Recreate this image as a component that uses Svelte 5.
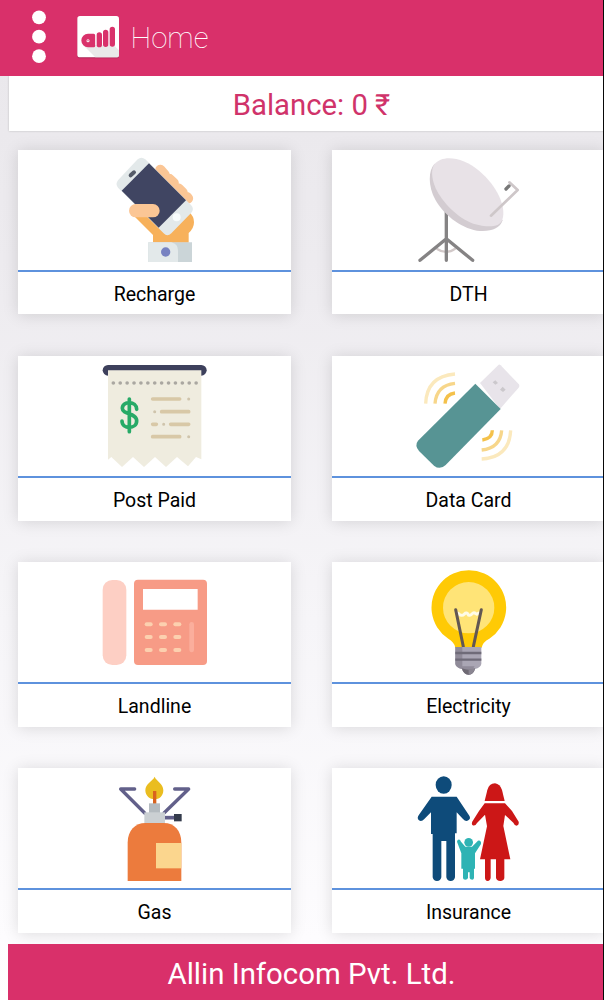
<script>
  const cards = [
    { id: 'recharge', label: 'Recharge', box: '-216 15 819 360' },
    { id: 'dth', label: 'DTH', box: '-204 15 819 360' },
    { id: 'postpaid', label: 'Post Paid', box: '-216 3 819 360' },
    { id: 'datacard', label: 'Data Card', box: '-204 3 819 360' },
    { id: 'landline', label: 'Landline', box: '-216 6 819 360' },
    { id: 'electricity', label: 'Electricity', box: '-234 6 819 360' },
    { id: 'gas', label: 'Gas', box: '-216 9 819 360' },
    { id: 'insurance', label: 'Insurance', box: '-219 9 819 360' }
  ];
  const holes = Array.from({ length: 13 }, (_, i) => 70 + i * 20.7);
  const keys = [193, 231, 270].flatMap((y) => [176, 219, 262].map((x) => ({ x, y })));
</script>

<div class="screen">
  <header>
    <svg class="menu" width="14" height="54" viewBox="0 0 14 54" fill="#fff">
      <circle cx="7" cy="7.3" r="6.9" /><circle cx="7" cy="26.7" r="6.9" /><circle cx="7" cy="46.2" r="6.9" />
    </svg>
    <svg class="logo" width="44" height="44" viewBox="0 0 132 132">
      <rect x="4" y="6" width="125" height="124" rx="8" fill="#ab2555" />
      <rect x="4" y="3" width="125" height="124" rx="8" fill="#fff" />
      <path d="M22 91L58 127H121Q129 127 129 119V106L112 89Z" fill="#e9e9e9" />
      <path d="M53 61V92H36A15.5 15.5 0 0 1 36 61Z" fill="#d9326b" stroke="#d9326b" stroke-width="9" stroke-linejoin="round" />
      <circle cx="36" cy="77" r="4.5" fill="#fff" /><circle cx="36" cy="77" r="2" fill="#d9326b" />
      <path d="M70 60V89M89 52V88M109 43V87" stroke="#d9326b" stroke-width="16" stroke-linecap="round" />
    </svg>
    <h1>Home</h1>
  </header>

  <div class="balance">Balance: 0 ₹</div>

  <main>
    {#each cards as card (card.id)}
      <section class="card">
        <svg class="picture" width="273" height="120" viewBox={card.box}>
          {#if card.id === 'recharge'}
            <path d="M129 210L189 270V293H296V264Q312 250 312 232Q312 214 298 202L238 160L150 170Z" fill="#f7b15b" />
            <path d="M211 75L224 90M238 102L251 114M265 130L278 143M290 156L294 160" stroke="#fbc695" stroke-width="31" stroke-linecap="round" />
            <path d="M143 43Q154 34 166 43L303 180Q314 192 304 203L244 265Q232 277 221 265L84 128Q75 118 84 106Z" fill="#e3e9ea" />
            <path d="M177 55L288 166L206 248L95 137Z" fill="#404562" />
            <path d="M122 91L132 82" stroke="#555b68" stroke-width="12" stroke-linecap="round" />
            <circle cx="260" cy="217" r="12" fill="#f8fcfc" />
            <rect x="117" y="177" width="92" height="40" rx="20" fill="#fbc695" />
            <path d="M175 292H306V351H175Z" fill="#cbd5d8" />
            <path d="M175 292H244Q264 297 264 316V351H175Z" fill="#e3e9ea" />
            <circle cx="227" cy="321" r="14" fill="#7782c1" />
          {:else if card.id === 'dth'}
            <path d="M110 311Q139 331 167 310" fill="none" stroke="#d2c9c9" stroke-width="7" />
            <path d="M139 200V346M60 346L139 281L218 346" fill="none" stroke="#858384" stroke-width="10" stroke-linecap="round" stroke-linejoin="round" />
            <path d="M104 56C84 76 84 124 106 164C136 216 190 253 240 258C276 260 300 249 308 226Z" fill="#d3ccd1" />
            <path d="M103 58C127 28 188 35 239 79C291 124 320 186 307 224C297 250 260 247 220 236C172 220 126 170 107 130C94 99 93 74 103 58Z" fill="#e8e2e7" />
            <path d="M273 212L353 135L328 112" fill="none" stroke="#cec7c9" stroke-width="8" stroke-linecap="round" stroke-linejoin="round" />
            <path d="M318 132L327 123" stroke="#777" stroke-width="10" stroke-linecap="round" />
          {:else if card.id === 'postpaid'}
            <rect x="38" y="30" width="312" height="32" rx="16" fill="#3d405c" />
            <path d="M54 46H334V313L318 306L294 334L261 306L228 336L195 306L162 336L129 306L96 336L64 306L54 314Z" fill="#efecdf" />
            {#each holes as x (x)}<circle cx={x} cy="84" r="5.5" fill="#aaa7a1" />{/each}
            <path d="M118 132V230M140 163C140 137 97 136 97 160C97 180 140 173 140 197C140 224 96 223 96 198" fill="none" stroke="#27aa67" stroke-width="11" stroke-linecap="round" />
            <g stroke="#d8c8a7" stroke-width="11" stroke-linecap="round">
              <path d="M188 132H269M215 170H296M188 208H199M242 208H296M188 245H269" />
              <path d="M296 132h.1M194 170h.1M221 208h.1M296 245h.1" stroke="#cfc4ac" stroke-width="9" />
            </g>
          {:else if card.id === 'datacard'}
            <path d="M240 84L296 29Q299 28 302 31L356 87Q360 92 356 98L300 162Z" fill="#e8e4ea" />
            <path d="M278 82L286 76L294 84L286 89ZM300 104L308 95L317 104L309 111Z" fill="#cbc8cc" />
            <path d="M226 86L302 162L137 330Q120 346 102 332L57 288Q43 271 54 257Z" fill="#579494" />
            <g fill="none" stroke-width="10">
              <path d="M135 146Q137 117 165 114M247 255Q277 251 277 226" stroke="#f4c14b" />
              <path d="M105 146Q109 91 165 85M245 285Q301 279 305 226" stroke="#f7d68a" />
              <path d="M77 146Q80 64 165 57M245 312Q328 307 332 226" stroke="#fbe9bd" />
            </g>
          {:else if card.id === 'landline'}
            <rect x="38" y="60" width="71" height="255" rx="29" fill="#fdcfc4" />
            <rect x="132" y="59" width="219" height="256" rx="12" fill="#f79b86" />
            <path d="M159 87H323V149H159Z" fill="#fff" />
            {#each keys as key (`${key.x}-${key.y}`)}
              <rect x={key.x - 12} y={key.y - 6} width="24" height="12" rx="6" fill="#fcd0af" />
            {/each}
            <rect x="298" y="186" width="14" height="91" rx="7" fill="#fbae9c" />
          {:else if card.id === 'electricity'}
            <path d="M135 263V260Q132 246 115 236A112 112 0 1 1 238 236Q218 246 215 263Z" fill="#ffca05" />
            <circle cx="176" cy="143" r="77" fill="#ffe477" />
            <path d="M139 158C151 160 146 166 155 166S163 157 170 159S172 167 179 166S187 156 194 159S200 166 206 159" fill="none" stroke="#fffce8" stroke-width="9" stroke-linecap="round" />
            <path d="M137 149L160 260M214 149L190 260" stroke="#625753" stroke-width="9" stroke-linecap="round" />
            <path d="M136 261H214V312Q212 323 195 327Q191 343 176 344Q161 343 156 327Q138 323 136 312Z" fill="#aaa6b4" />
            <path d="M136 261H157V319H194L176 344Q161 343 156 327Q138 323 136 312Z" fill="#908b99" />
            <path d="M156 325Q176 333 195 325Q192 344 176 344Q160 344 156 325Z" fill="#6e6973" />
            <path d="M176 328Q187 328 195 325Q190 344 176 344Z" fill="#8a8591" />
            <path d="M136 279H214M136 299H214" stroke="#6f6b78" stroke-width="7" />
          {:else if card.id === 'gas'}
            <path d="M194 35C188 49 166 55 166 76C166 93 180 103 194 103S220 93 220 76C220 55 199 49 194 35Z" fill="#eabd20" />
            <path d="M194 78V120" stroke="#d9631e" stroke-width="10" />
            <path d="M134 72H92L164 144M254 72H296L222 144" fill="none" stroke="#62608a" stroke-width="10" stroke-linecap="round" stroke-linejoin="round" />
            <path d="M220 158H256" stroke="#62608a" stroke-width="11" />
            <path d="M252 147H275V169H252Z" fill="#343b4c" />
            <path d="M177 115H210V148H177Z" fill="#b4bbc0" />
            <path d="M163 142H225V180H163Z" fill="#cbd0d3" />
            <path d="M113 348V233C113 196 136 174 166 174H222C252 174 274 196 274 233V348Z" fill="#ec7b3d" />
            <path d="M198 234H274V310H198Z" fill="#fbd68e" />
          {:else}
            <g fill="#0e4b7a">
              <ellipse cx="116" cy="60" rx="24" ry="26" />
              <path d="M80 95H155L192 151Q199 161 190 166Q182 171 174 162L155 142V205H150V337Q148 348 137 348T124 337V228H109V337Q107 348 96 348T83 337V207H78V142L58 162Q49 172 41 165Q35 158 42 149Z" />
            </g>
            <g fill="#cc1717">
              <path d="M239 108L247 75Q252 56 270 55Q285 57 291 75L299 108Z" />
              <path d="M239 115H300L321 138L341 170Q343 180 335 182Q328 181 325 173L300 150L295 183L316 283H298V339Q297 347 286 348Q274 347 273 338V283H257V338Q256 347 248 348Q240 347 240 338V283H225L246 184L240 149L216 174Q210 185 202 180Q198 173 205 165L222 138Z" />
            </g>
            <g fill="#2eb3b4">
              <circle cx="191" cy="232" r="13" />
              <path d="M158 225Q164 220 168 230L181 245H201L216 230Q222 223 228 231V237L210 265V311H207V339Q206 344 202 344Q195 344 194 339V322H189V339Q187 344 181 344Q174 344 174 339V311H169V265L156 230Z" />
            </g>
          {/if}
        </svg>
        <h2>{card.label}</h2>
      </section>
    {/each}
  </main>

  <footer>Allin Infocom Pvt. Ltd.</footer>
  <div class="edge"></div>
</div>

<style>
  :global(body) {
    margin: 0;
    overflow: hidden;
  }
  .screen {
    position: relative;
    box-sizing: border-box;
    width: 604px;
    height: 1000px;
    overflow: hidden;
    display: flex;
    flex-direction: column;
    background: linear-gradient(#e9e7eb 0, #edebef 260px, #f6f5f8 620px, #fdfcfe 940px, #fff 1000px);
    font-family: Roboto, sans-serif;
  }
  header {
    position: relative;
    z-index: 1;
    flex: none;
    height: 75.5px;
    display: flex;
    align-items: center;
    background: #d9306a;
    color: #fff;
  }
  .menu {
    margin: 0 0 2px 32px;
  }
  .logo {
    margin: 0 0 2px 30px;
  }
  h1 {
    margin: 0 0 0 10.5px;
    font-size: 29.4px;
    line-height: 40px;
    font-weight: 100;
  }
  .balance {
    flex: none;
    box-sizing: border-box;
    width: 605px;
    height: 55px;
    margin-left: 9px;
    background: #fff;
    box-shadow: 0 0 2px #bbb;
    color: #d0336a;
    font-size: 29.3px;
    line-height: 58px;
    text-align: center;
  }
  main {
    display: grid;
    grid-template-columns: 273px 273px;
    grid-auto-rows: 164.7px;
    gap: 41.4px 41px;
    margin: 19.3px 0 0 18px;
  }
  .card {
    background: #fff;
    box-shadow: 0 1px 15px rgba(0, 0, 0, 0.13);
  }
  .picture {
    display: block;
  }
  h2 {
    margin: 0;
    border-top: 2px solid #5e92dd;
    color: #000;
    font-size: 19.5px;
    font-weight: 400;
    line-height: 46px;
    height: 42px;
    text-align: center;
  }
  footer {
    position: relative;
    flex: none;
    width: 607px;
    height: 56px;
    margin: auto 0 0 8px;
    background: #d9306a;
    color: #fff;
    font-size: 29.4px;
    line-height: 60px;
    text-align: center;
  }
  .edge {
    position: absolute;
    top: 0;
    right: 0;
    z-index: 2;
    width: 1.5px;
    height: 100%;
    background: #080808;
  }
</style>
